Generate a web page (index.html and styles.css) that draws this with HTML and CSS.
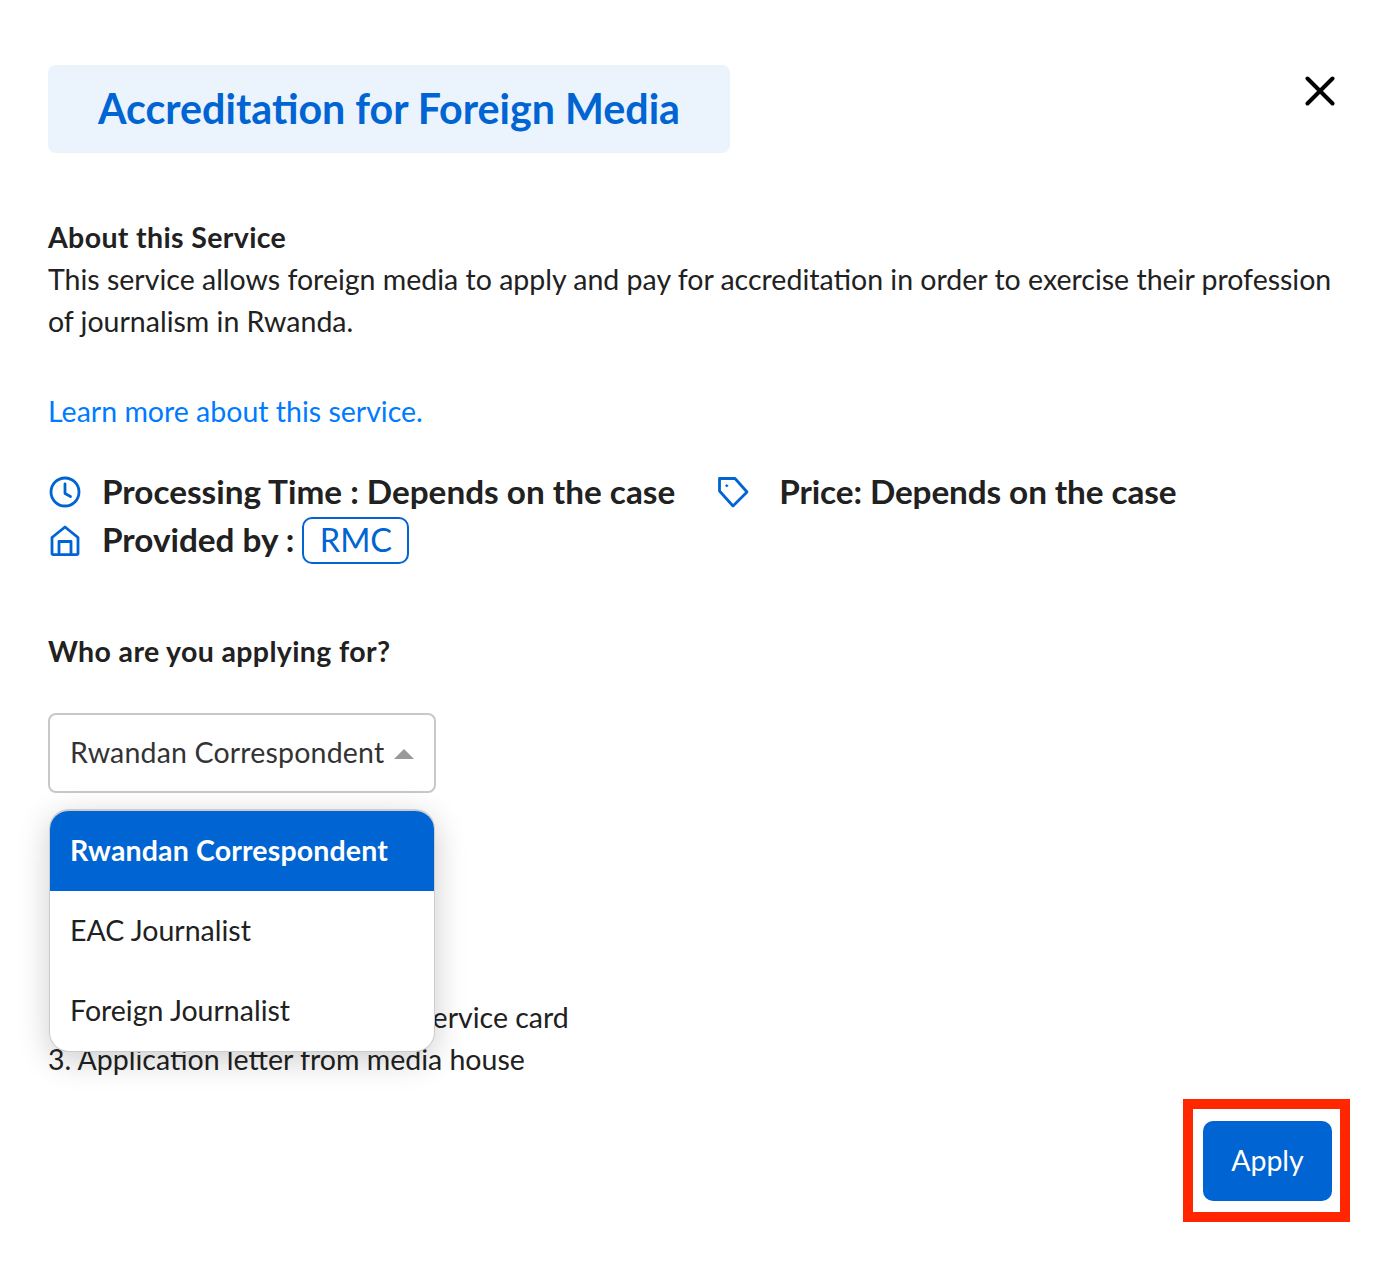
FILE: index.html
```html
<!DOCTYPE html>
<html lang="en">
<head>
<meta charset="utf-8">
<title>Accreditation for Foreign Media</title>
<link rel="stylesheet" href="styles.css">
</head>
<body>
<main class="modal">
  <header class="header">
    <h1 class="title">Accreditation for Foreign Media</h1>
    <button class="close" aria-label="Close">
      <svg width="30" height="30" viewBox="0 0 30 30"><path d="M2.500 2.500L27.500 27.500M27.500 2.500L2.500 27.500" fill="none" stroke="#000" stroke-width="4" stroke-linecap="round"/></svg>
    </button>
  </header>
  <section class="about">
    <p class="strong">About this Service</p>
    <p class="nowrap">This service allows foreign media to apply and pay for accreditation in order to exercise their profession<br>of journalism in Rwanda.</p>
  </section>
  <a class="learn" href="#">Learn more about this service.</a>
  <div class="meta">
    <div class="meta-row">
      <svg class="icon" width="34" height="34" viewBox="0 0 34 34" fill="none" stroke="#0064d2" stroke-width="2.800" stroke-linecap="round" stroke-linejoin="round"><circle cx="17" cy="17" r="14"/><path d="M17 9V18.500L22.500 21.500"/></svg>
      <span class="meta-text">Processing Time : Depends on the case</span>
      <svg class="icon tag" width="34" height="34" viewBox="0 0 34 34" fill="none" stroke="#0064d2" stroke-width="2.800" stroke-linecap="round" stroke-linejoin="round"><path d="M3.500 3.500H19L31 17 17 31 3.500 16Z"/><circle cx="10.700" cy="10.700" r="1" fill="#0064d2" stroke-width="0.800"/></svg>
      <span class="meta-text price">Price: Depends on the case</span>
    </div>
    <div class="meta-row">
      <svg class="icon" width="34" height="34" viewBox="0 0 34 34" fill="none" stroke="#0064d2" stroke-width="2.800" stroke-linecap="round" stroke-linejoin="round"><path d="M4 14.500L17 4 30 14.500V30.500A1.200 1.200 0 0 1 28.800 31.700H5.200A1.200 1.200 0 0 1 4 30.500Z"/><path d="M11 31.700V18.500H23V31.700"/></svg>
      <span class="meta-text provided">Provided by :</span>
      <span class="chip">RMC</span>
    </div>
  </div>
  <p class="strong question">Who are you applying for?</p>
  <div class="select-wrap">
    <div class="select">
      <span class="select-label">Rwandan Correspondent</span>
      <span class="caret"></span>
    </div>
    <ul class="menu">
      <li class="option selected">Rwandan Correspondent</li>
      <li class="option">EAC Journalist</li>
      <li class="option">Foreign Journalist</li>
    </ul>
  </div>
  <section class="docs">
    <p class="strong">Required documents</p>
    <p>1. Passport copy</p>
    <p>2. Copy of passport, or media service card</p>
    <p>3. Application letter from media house</p>
  </section>
  <div class="actions">
    <div class="highlight"><button class="apply">Apply</button></div>
  </div>
</main>
</body>
</html>
```
FILE: styles.css
```css
* { box-sizing: border-box; }
html, body { margin: 0; background: #fff; }
body {
  font-family: "Lato", "Noto Sans", sans-serif;
  font-size: 28.500px;
  line-height: 42px;
  color: #212121;
}
p { margin: 0; }
.nowrap { white-space: nowrap; }
.modal { padding: 65px 46px 0 48px; height: 1280px; overflow: hidden; }
.header { display: flex; justify-content: space-between; align-items: flex-start; padding-right: 15px; }
.title {
  margin: 0;
  width: 682px;
  height: 88px;
  background: #ebf3fc;
  border-radius: 8px;
  color: #0064d2;
  font-size: 41.200px;
  font-weight: 700;
  line-height: 86px;
  text-align: center;
  white-space: nowrap;
}
.close { border: 0; background: none; padding: 0; margin-top: 11px; width: 30px; height: 30px; display: block; }
.close svg { display: block; }
.about { margin-top: 63px; }
.strong { font-weight: 700; letter-spacing: 0.360px; }
.learn { display: block; margin-top: 48px; color: #007bff; text-decoration: none; }
.meta { margin-top: 36px; }
.meta-row { display: flex; align-items: center; height: 48px; }
.icon { display: block; flex: none; }
.meta-text { font-size: 33.300px; font-weight: 700; margin-left: 20px; padding-bottom: 2px; white-space: nowrap; }
.tag { margin-left: 41px; }
.tag + .meta-text { margin-left: 29px; }
.price { letter-spacing: -0.100px; }
.chip {
  margin-left: 8px;
  width: 107px;
  height: 47px;
  border: 2px solid #0064d2;
  border-radius: 10px;
  color: #0064d2;
  font-size: 32.500px;
  line-height: 42px;
  text-align: center;
}
.question { margin-top: 66px; }
.select-wrap { position: relative; width: 388px; margin-top: 41px; }
.select {
  height: 80px;
  border: 2px solid #c8c8c8;
  border-radius: 8px;
  padding: 0 20px;
  display: flex;
  align-items: center;
  justify-content: space-between;
  white-space: nowrap;
  color: #333;
}
.select-label { padding-bottom: 2px; letter-spacing: 0.180px; }
.caret { width: 0; height: 0; border-left: 10px solid transparent; border-right: 10px solid transparent; border-bottom: 10px solid #999; margin-top: 2px; }
.menu {
  position: absolute;
  left: 1px;
  top: 96px;
  width: 386px;
  margin: 0;
  padding: 0;
  list-style: none;
  background: #fff;
  border: 1px solid #ccc;
  border-top-width: 2px;
  border-radius: 20px;
  overflow: hidden;
  box-shadow: 0 8px 32px rgba(0, 0, 0, 0.2);
}
.option { height: 80px; padding: 0 20px; line-height: 78px; white-space: nowrap; }
.selected { background: #0064d2; color: #fff; font-weight: 700; letter-spacing: 0.150px; }
.docs { margin-top: 119px; }
.actions { display: flex; justify-content: flex-end; margin-top: 19px; }
.highlight { width: 167px; height: 123px; border: 10px solid #ff2600; padding: 12px 8px 11px 10px; }
.apply {
  display: block;
  width: 129px;
  height: 80px;
  border: 0;
  border-radius: 10px;
  background: #0064d2;
  color: #fff;
  font: inherit;
  padding-bottom: 4px;
}
```
